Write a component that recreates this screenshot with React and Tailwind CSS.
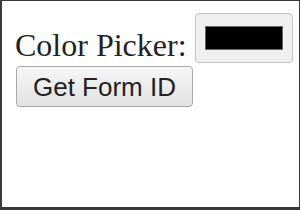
import React from 'react';

const App = () => {
    return (
        <div className="w-[300px] h-[210px] bg-white border-t border-r border-l-2 border-b-[3px] border-[#3a3a3a] overflow-hidden">
            <div className="pl-[13px] pt-[12px]">
                <div className="flex items-start">
                    <span className="mt-[14px] text-[32px] leading-[36px] text-[#222] font-['Liberation_Serif',serif]">Color Picker:</span>
                    <div className="ml-[8px] w-[98px] h-[50px] bg-[#efefef] border border-[#c4c4c4] rounded-[4px] px-[9px] py-[12px]">
                        <div className="w-full h-full bg-black border border-[#666]"></div>
                    </div>
                </div>
                <button className="mt-[3px] ml-[1px] w-[177px] h-[41px] bg-gradient-to-b from-[#f6f6f6] to-[#e2e2e2] border border-[#a9a9a9] rounded-[4px] text-[26px] leading-none text-[#222] font-['Liberation_Sans',Arial,sans-serif]">
                    Get Form ID
                </button>
            </div>
        </div>
    );
};

export default App;
